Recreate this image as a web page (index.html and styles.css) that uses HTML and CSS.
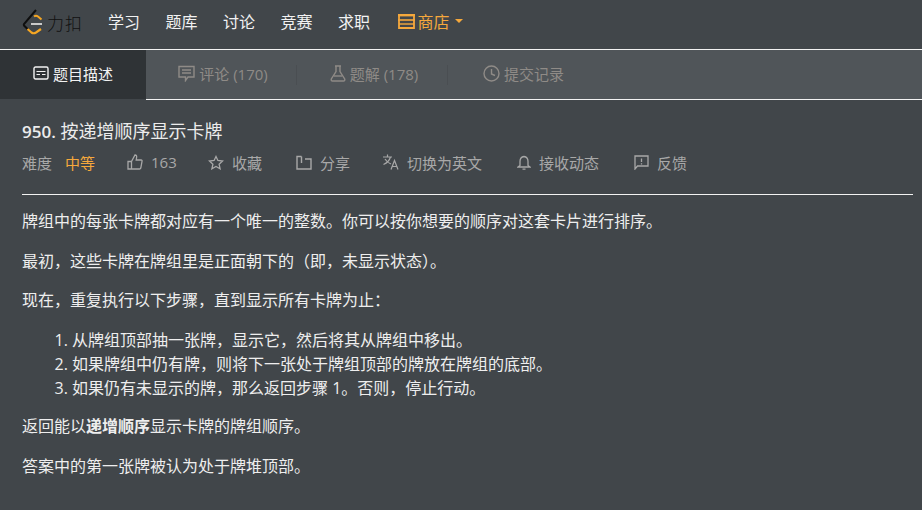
FILE: index.html
```html
<!DOCTYPE html>
<html lang="zh-CN">
<head>
<meta charset="utf-8">
<title>950. 按递增顺序显示卡牌</title>
<link rel="stylesheet" href="styles.css">
</head>
<body>
<header class="nav">
  <a class="logo">
    <svg class="logo-mark" width="22" height="26" viewBox="0 0 22 26" fill="none"><path d="M14 1 2 15 Q1.500 15.800 2 16.500L6 20.500" stroke="#0e0e0e" stroke-width="2"/><path d="M5.500 20 9.500 23.500Q11.500 25 14 23.500L19 20" stroke="#f5a623" stroke-width="2.200"/><path d="M12 7.500Q14 6 16 7.500L19.500 10.500" stroke="#f5a623" stroke-width="2"/><path d="M9 15H20" stroke="#c9c9c9" stroke-width="2"/></svg>
    <span class="logo-text">力扣</span>
  </a>
  <a class="nav-item">学习</a>
  <a class="nav-item">题库</a>
  <a class="nav-item">讨论</a>
  <a class="nav-item">竞赛</a>
  <a class="nav-item">求职</a>
  <a class="nav-item shop">
    <svg width="17" height="15" viewBox="0 0 17 15" fill="none" stroke="#f5a83c"><path d="M0 1.200H17" stroke-width="2.400"/><path d="M0 6H17" stroke-width="1.600"/><path d="M1 1V14H16V1" stroke-width="1.800"/><path d="M1 10H16" stroke-width="1.400"/></svg>
    商店<i class="caret"></i>
  </a>
</header>
<nav class="tabs">
  <a class="tab active">
    <svg width="16" height="14" viewBox="0 0 16 14" fill="none" stroke="currentColor"><rect x="1" y="1" width="14" height="12" rx="1.500" stroke-width="1.400"/><path d="M3.500 5.500H12.500M3.500 8.500H7M9 8.500H12.500" stroke-width="1.200"/></svg>
    题目描述
  </a>
  <a class="tab shifted">
    <svg width="17" height="17" viewBox="0 0 17 17" fill="none" stroke="currentColor" stroke-width="1.400"><path d="M1 1.500H16V12H10L7.500 15.500V12H1Z"/><path d="M4 5H13M4 8H13"/></svg>
    评论 (170)
  </a>
  <a class="tab shifted divided">
    <svg width="16" height="17" viewBox="0 0 16 17" fill="none" stroke="currentColor" stroke-width="1.400"><path d="M5 1H11M6 1V6.500L1.300 14Q.8 16 2.500 16H13.500Q15.200 16 14.700 14L10 6.500V1"/><path d="M3.800 11H12.200"/></svg>
    题解 (178)
  </a>
  <a class="tab divided">
    <svg width="17" height="17" viewBox="0 0 17 17" fill="none" stroke="currentColor" stroke-width="1.400"><circle cx="8.500" cy="8.500" r="7.500"/><path d="M8.500 4V9L12 10.500"/></svg>
    提交记录
  </a>
  <span class="tab-rest"></span>
</nav>
<main class="content">
  <h1 class="title"><span class="num">950.</span> 按递增顺序显示卡牌</h1>
  <div class="meta">
    <span class="meta-item diff">难度<b class="level">中等</b></span>
    <span class="meta-item likes">
      <svg width="16" height="16" viewBox="0 0 16 16" fill="none" stroke="currentColor" stroke-width="1.300"><path d="M1 7.500H4.500V15H1ZM4.500 7.500 8 1Q10 1 9.600 3.500L9.200 6H14Q15.400 6 15 7.500L13.800 14Q13.500 15 12.500 15H4.500"/></svg>
      163
    </span>
    <span class="meta-item fav">
      <svg width="16" height="15" viewBox="0 0 16 15" fill="none" stroke="currentColor" stroke-width="1.300"><path d="M8 1.500 9.900 5.500 14.600 6 11.100 9.200 12.100 13.800 8 11.500 3.900 13.800 4.900 9.200 1.400 6 6.100 5.500Z"/></svg>
      收藏
    </span>
    <span class="meta-item share">
      <svg width="16" height="15" viewBox="0 0 16 15" fill="none" stroke="currentColor" stroke-width="1.400"><path d="M5.500 1.500H1V14H15V7"/><path d="M5.500 1.500V8"/><path d="M9 4H15V7"/></svg>
      分享
    </span>
    <span class="meta-item lang">
      <svg width="16" height="16" viewBox="0 0 16 16" fill="none" stroke="currentColor" stroke-width="1.200"><path d="M0 3H9M4.500 .5V3M7.500 3Q6 8 .5 10.500M2 5Q4 8.500 8 10"/><path d="M8 15.500 11.500 6.500 15 15.500M9.200 12.500H13.800"/></svg>
      切换为英文
    </span>
    <span class="meta-item notify">
      <svg width="14" height="15" viewBox="0 0 14 15" fill="none" stroke="currentColor" stroke-width="1.300"><path d="M7 1.500Q11 2 11 6.500V10.500L13 12H1L3 10.500V6.500Q3 2 7 1.500ZM5.500 14.200H8.500"/></svg>
      接收动态
    </span>
    <span class="meta-item feedback">
      <svg width="15" height="15" viewBox="0 0 15 15" fill="none" stroke="currentColor" stroke-width="1.300"><path d="M1 1H14V11H3.500L1 14Z"/><path d="M7.500 3.500V7M7.500 8.200V9.400"/></svg>
      反馈
    </span>
  </div>
  <hr class="rule">
  <div class="desc">
    <p>牌组中的每张卡牌都对应有一个唯一的整数。你可以按你想要的顺序对这套卡片进行排序。</p>
    <p>最初，这些卡牌在牌组里是正面朝下的（即，未显示状态）。</p>
    <p>现在，重复执行以下步骤，直到显示所有卡牌为止：</p>
    <ol>
      <li>从牌组顶部抽一张牌，显示它，然后将其从牌组中移出。</li>
      <li>如果牌组中仍有牌，则将下一张处于牌组顶部的牌放在牌组的底部。</li>
      <li>如果仍有未显示的牌，那么返回步骤 1。否则，停止行动。</li>
    </ol>
    <p>返回能以<strong>递增顺序</strong>显示卡牌的牌组顺序。</p>
    <p>答案中的第一张牌被认为处于牌堆顶部。</p>
  </div>
</main>
</body>
</html>
```
FILE: styles.css
```css
* { box-sizing: border-box; }
html, body { margin: 0; height: 100%; overflow: hidden; }
body {
  background: #41464a;
  color: #e6e6e6;
  font-family: "Open Sans", "Noto Sans CJK SC", sans-serif;
  font-size: 15px;
}
.nav {
  display: flex;
  align-items: center;
  height: 50px;
  padding: 0 0 7px 22px;
  border-bottom: 1px solid #f2f2f2;
  background: #41464a;
}
.logo { display: flex; align-items: center; width: 86px; gap: 3px; }
.logo-mark { flex: none; margin-top: 2px; }
.logo-text { color: #111; font-size: 17px; letter-spacing: 1px; font-weight: 300; margin-top: 2px; }
.nav-item { color: #f2f2f2; font-size: 16px; margin-right: 25.500px; display: flex; align-items: center; }
.shop { color: #f5a83c; gap: 3px; margin-left: 2px; }
.caret {
  width: 0; height: 0; margin: 0 0 0 2px;
  border: 4px solid transparent;
  border-top-color: #f5a83c;
  border-bottom: 0;
}
.tabs {
  display: flex;
  height: 50px;
  background: #505559;
}
.tab {
  display: flex;
  align-items: center;
  justify-content: center;
  gap: 4px;
  width: 151px;
  padding-bottom: 3px;
  color: #8f8b87;
  border-bottom: 1px solid #f2f2f2;
  font-size: 15px;
}
.tab.shifted { padding-left: 3px; }
.divided { position: relative; }
.divided::before {
  content: "";
  position: absolute;
  left: -1px;
  top: 15px;
  height: 20px;
  width: 1px;
  background: #4a4e52;
}
.tab.active {
  width: 146px;
  color: #f2f2f2;
  background: #2f3336;
  border-bottom-color: #41464a;
}
.tab-rest { flex: 1; border-bottom: 1px solid #f2f2f2; }
.content { padding: 0 9px 0 22px; }
.title {
  margin: 19px 0 0;
  font-size: 18px;
  line-height: 24px;
  font-weight: 400;
  color: #ececec;
}
.num { font-size: 17px; font-weight: 600; }
.meta {
  display: flex;
  align-items: center;
  height: 20px;
  margin-top: 8px;
  color: #a8a8a8;
  font-size: 15px;
}
.meta-item { display: flex; align-items: center; gap: 8px; }
.level { color: #f5a83c; font-weight: 400; margin-left: 5px; }
.diff { width: 105px; }
.likes { width: 81px; }
.fav { width: 88px; }
.share { width: 87px; }
.lang { width: 134px; }
.notify { width: 117px; }
.rule {
  height: 1px;
  border: 0;
  margin: 22px 0 0;
  background: #f2f2f2;
}
.desc { margin-top: 14px; line-height: 24px; font-size: 16px; color: #eeeeee; }
.desc p { margin: 0 0 15.500px; }
.desc ol { margin: 0 0 14.500px; padding-left: 50px; }
.desc strong { font-weight: 700; }
```
